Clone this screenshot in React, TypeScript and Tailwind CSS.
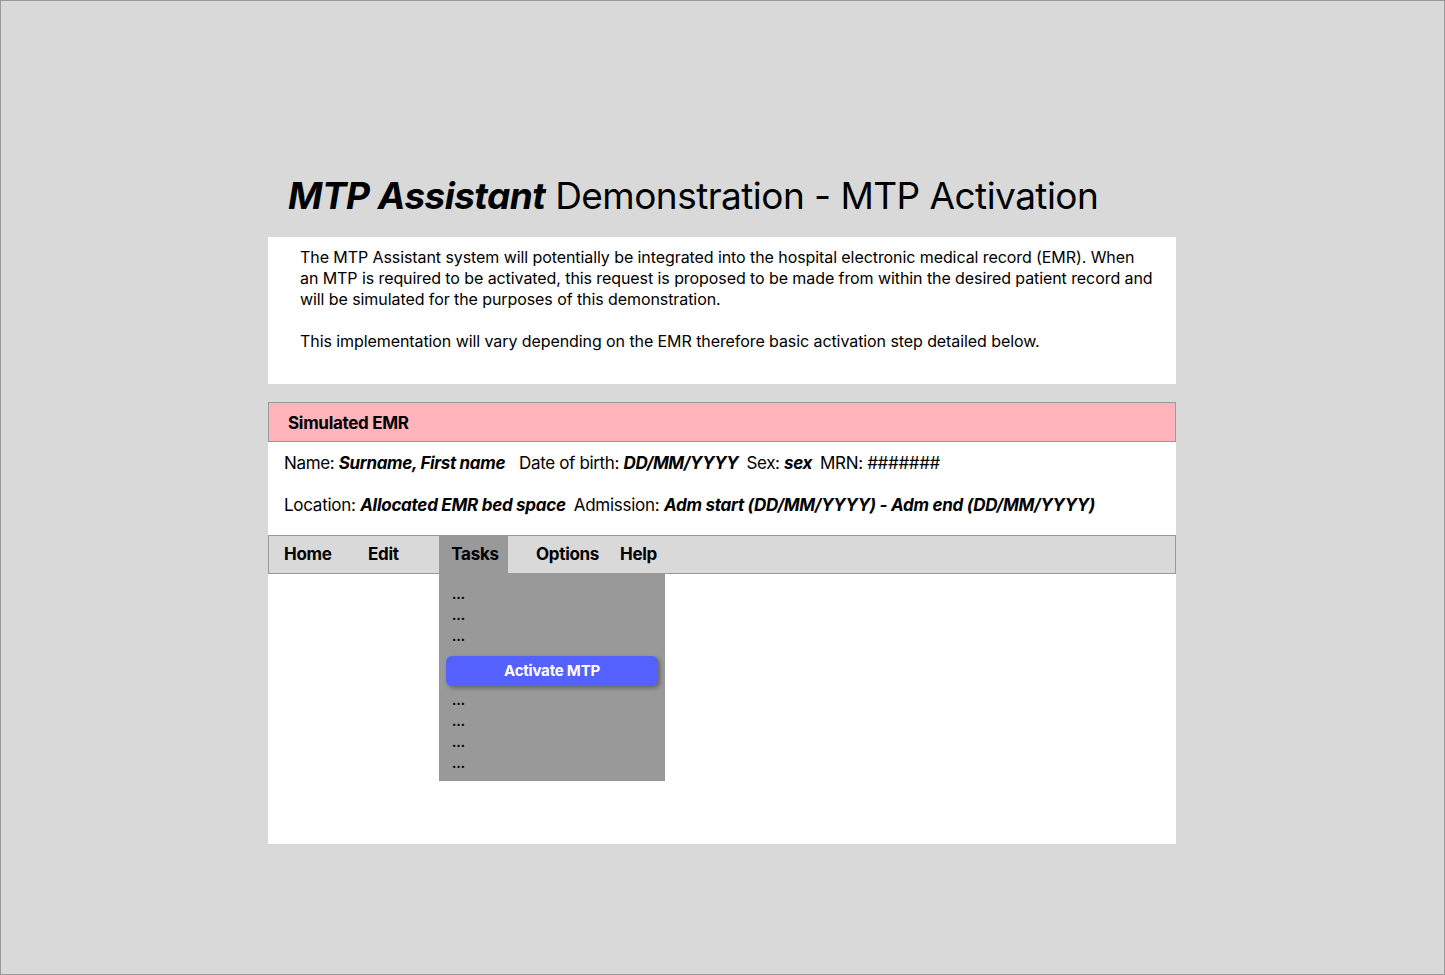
import React from "react";

export default function App() {
  const dots = (
    <div className="pl-[13px] text-[13px] font-bold leading-[21px] text-black">…</div>
  );
  return (
    <div
      className="w-[1445px] h-[975px] bg-[#d9d9d9] border border-[#999999] text-black overflow-hidden"
      style={{ fontFamily: "Inter, 'Noto Sans', sans-serif" }}
    >
      <div className="w-[908px] ml-[267px] pt-[172px]">
        <h1 className="pl-[20px] text-[37px] leading-[46px] tracking-[-0.55px] font-normal whitespace-nowrap">
          <span className="font-bold italic">MTP Assistant</span> Demonstration - MTP Activation
        </h1>
        <div className="mt-[18px] bg-white h-[147px] pl-[32px] pr-[20px] pt-[10px] text-[16px] leading-[21px] tracking-[-0.08px] whitespace-nowrap">
          <p>
            The MTP Assistant system will potentially be integrated into the hospital electronic medical record (EMR). When
            <br />
            an MTP is required to be activated, this request is proposed to be made from within the desired patient record and
            <br />
            will be simulated for the purposes of this demonstration.
          </p>
          <p className="mt-[21px]">
            This implementation will vary depending on the EMR therefore basic activation step detailed below.
          </p>
        </div>
        <div className="mt-[18px] bg-white h-[442px] flex flex-col">
          <div className="h-[40px] bg-[#ffb3ba] border border-[#999999] flex items-center pl-[19px] pt-[3px] text-[17px] font-bold tracking-[-0.3px]">
            Simulated EMR
          </div>
          <div className="h-[93px] pl-[16px] pt-[10px] text-[17px] leading-[22px] tracking-[-0.35px] whitespace-nowrap">
            <div>
              Name: <b className="italic">Surname, First name</b>
              <span className="ml-[14px]">Date of birth: </span>
              <b className="italic">DD/MM/YYYY</b>
              <span className="ml-[8px]">Sex: </span>
              <b className="italic">sex</b>
              <span className="ml-[8px]">MRN: #######</span>
            </div>
            <div className="mt-[20px] tracking-[-0.27px]">
              Location: <b className="italic">Allocated EMR bed space</b>
              <span className="ml-[8px]">Admission: </span>
              <b className="italic">Adm start (DD/MM/YYYY) - Adm end (DD/MM/YYYY)</b>
            </div>
          </div>
          <div className="relative h-[39px] bg-[#d9d9d9] border border-[#999999] flex items-stretch text-[17px] font-bold tracking-[-0.3px]">
            <div className="pl-[15px] w-[99px] flex items-center">Home</div>
            <div className="w-[71px] flex items-center">Edit</div>
            <div className="w-[69px] bg-[#999999] flex items-center justify-center pl-[3px] -mt-px -mb-px">Tasks</div>
            <div className="pl-[28px] w-[112px] flex items-center">Options</div>
            <div className="flex items-center">Help</div>
            <div className="absolute left-[170px] top-[38px] w-[226px] h-[207px] bg-[#999999] pt-[10px] font-normal">
              {dots}
              {dots}
              {dots}
              <div className="mx-[7px] mt-[9px] mb-[4px] h-[30px] rounded-[6px] bg-[#5561ff] shadow-[2px_2px_4px_rgba(0,0,0,0.35)] flex items-center justify-center text-white text-[15px] font-bold tracking-[-0.2px]">
                Activate MTP
              </div>
              {dots}
              {dots}
              {dots}
              {dots}
            </div>
          </div>
        </div>
      </div>
    </div>
  );
}
